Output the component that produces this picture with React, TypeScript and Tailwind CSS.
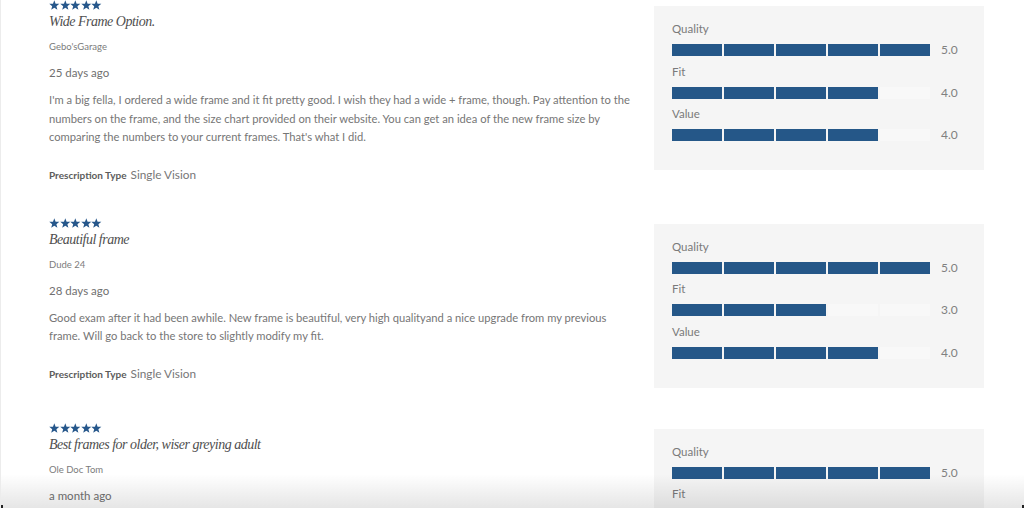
import React from "react";

const SANS = { fontFamily: "Lato, 'Liberation Sans', sans-serif" };
const SERIF = { fontFamily: "'Liberation Serif', serif" };

type Metric = { label: string; value: number };
type Review = {
  title: string;
  author: string;
  date: string;
  body?: string;
  rx?: string;
  metrics: Metric[];
};

const reviews: Review[] = [
  {
    title: "Wide Frame Option.",
    author: "Gebo'sGarage",
    date: "25 days ago",
    body:
      "I'm a big fella, I ordered a wide frame and it fit pretty good. I wish they had a wide + frame, though. Pay attention to the numbers on the frame, and the size chart provided on their website. You can get an idea of the new frame size by comparing the numbers to your current frames. That's what I did.",
    rx: "Single Vision",
    metrics: [
      { label: "Quality", value: 5 },
      { label: "Fit", value: 4 },
      { label: "Value", value: 4 },
    ],
  },
  {
    title: "Beautiful frame",
    author: "Dude 24",
    date: "28 days ago",
    body:
      "Good exam after it had been awhile. New frame is beautiful, very high qualityand a nice upgrade from my previous frame. Will go back to the store to slightly modify my fit.",
    rx: "Single Vision",
    metrics: [
      { label: "Quality", value: 5 },
      { label: "Fit", value: 3 },
      { label: "Value", value: 4 },
    ],
  },
  {
    title: "Best frames for older, wiser greying adult",
    author: "Ole Doc Tom",
    date: "a month ago",
    body: "Great frames, comfortable and light. Exactly what I was looking for.",
    rx: "Single Vision",
    metrics: [
      { label: "Quality", value: 5 },
      { label: "Fit", value: 5 },
      { label: "Value", value: 5 },
    ],
  },
];

function Star() {
  return (
    <svg width="10.6" height="10" viewBox="0 0 24 22" className="block">
      <polygon
        fill="#26578b"
        points="12,0 14.94,7.95 23.41,8.29 16.76,13.55 19.05,21.71 12,17 4.95,21.71 7.24,13.55 0.59,8.29 9.06,7.95"
      />
    </svg>
  );
}

function MetricRow({ m }: { m: Metric }) {
  return (
    <div className="flex flex-col">
      <div className="text-[11.5px] leading-[14px] text-[#7a7a7a]">{m.label}</div>
      <div className="mt-[8px] flex items-center">
        <div className="flex gap-[2px]">
          {[0, 1, 2, 3, 4].map((i) => (
            <div
              key={i}
              className={
                i < m.value
                  ? "h-[12px] w-[50px] bg-[#255788]"
                  : "h-[12px] w-[50px] bg-[#f8f8f8]"
              }
            />
          ))}
        </div>
        <div className="ml-[11px] text-[12px] leading-[12px] text-[#808080]">
          {m.value.toFixed(1)}
        </div>
      </div>
    </div>
  );
}

function ReviewRow({ r }: { r: Review }) {
  return (
    <div className="flex pl-[48px] pb-[35px]">
      <div className="w-[587px] shrink-0">
        <div className="flex h-[10px]">
          <Star />
          <Star />
          <Star />
          <Star />
          <Star />
        </div>
        <div
          className="mt-[2px] text-[14px] italic leading-[20px] tracking-[-0.5px] text-[#4f4f4f]"
          style={SERIF}
        >
          {r.title}
        </div>
        <div className="mt-[8px] text-[9.5px] leading-[14px] text-[#7c7c7c]">
          {r.author}
        </div>
        <div className="mt-[11px] text-[11.5px] leading-[16px] text-[#707070]">
          {r.date}
        </div>
        {r.body && (
          <div className="mt-[10px] text-[11.2px] leading-[18.5px] text-[#767676]">
            {r.body}
          </div>
        )}
        {r.rx && (
          <div className="mt-[20px] flex items-baseline leading-[16px]">
            <span className="text-[10px] font-bold text-[#5c5c5c]">
              Prescription Type
            </span>
            <span className="ml-[4px] text-[11.8px] text-[#777777]">{r.rx}</span>
          </div>
        )}
      </div>
      <div className="ml-[18px] mt-[6px] h-[164px] w-[330px] shrink-0 bg-[#f5f5f5] pl-[18px] pt-[16px]">
        <div className="flex flex-col gap-[8.7px]">
          {r.metrics.map((m) => (
            <MetricRow key={m.label} m={m} />
          ))}
        </div>
      </div>
    </div>
  );
}

export default function App() {
  return (
    <div
      className="relative h-[508px] w-[1024px] overflow-hidden border-l border-[#ececec] bg-white"
      style={SANS}
    >
      <div className="flex flex-col">
        {reviews.map((r) => (
          <ReviewRow key={r.title} r={r} />
        ))}
      </div>
      <div className="pointer-events-none absolute inset-x-0 bottom-0 h-[34px] bg-gradient-to-b from-transparent to-black/[0.1]" />
      <div className="pointer-events-none absolute bottom-0 left-0 h-[3px] w-[2px] bg-[#222]" />
      <div className="pointer-events-none absolute bottom-0 right-0 h-[3px] w-[2px] bg-[#222]" />
    </div>
  );
}
